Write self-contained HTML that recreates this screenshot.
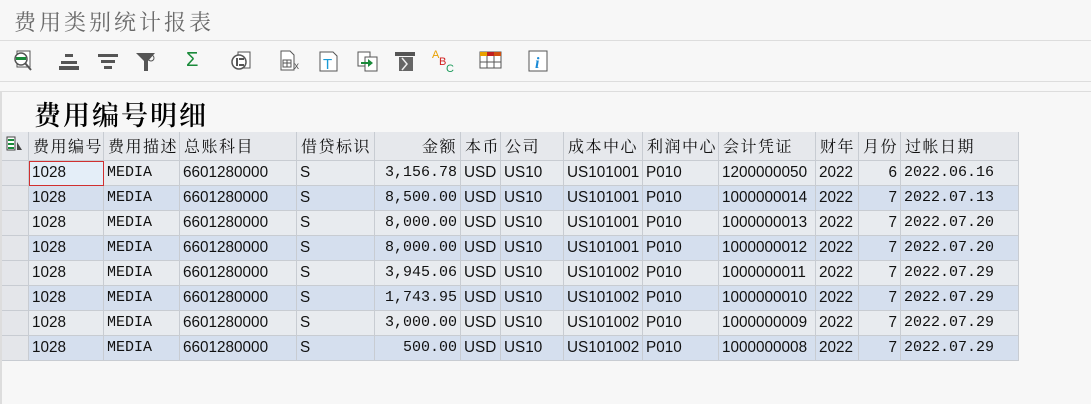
<!DOCTYPE html><html><head><meta charset="utf-8"><style>
*{margin:0;padding:0;box-sizing:border-box}
body{width:1091px;height:404px;background:#f7f7f7;position:relative;overflow:hidden;font-family:"Liberation Sans","Noto Sans CJK SC",sans-serif}
.a{position:absolute}
.t{left:14px;top:6px;font-family:"Noto Serif CJK SC",serif;font-size:22px;color:#6a6a6a;letter-spacing:3px}
.h2{left:34px;top:94px;font-family:"Noto Serif CJK SC",serif;font-size:27px;color:#000;letter-spacing:2px;font-weight:600}
.c{position:absolute;height:25px;line-height:24px;font-size:15.3px;color:#111;padding-left:3px;white-space:nowrap;border-right:1px solid #c8ccd2;border-bottom:1px solid #c8ccd2;overflow:hidden}
.hd{font-family:"Noto Serif CJK SC","Noto Sans CJK SC",serif;font-size:16px;letter-spacing:1.5px;background:#e6e8ec;height:29px;line-height:27px}
.r{text-align:right;padding-right:3px}
.m{font-family:"Liberation Mono",monospace;font-size:15px}
svg{position:absolute}
</style></head><body>
<div class="a t">费用类别统计报表</div>
<div class="a" style="left:0;top:40px;width:1091px;height:1px;background:#ddd"></div>
<div class="a" style="left:0;top:81px;width:1091px;height:1px;background:#ddd"></div>
<div class="a" style="left:0;top:91px;width:1091px;height:1px;background:#ddd"></div>
<div class="a" style="left:0;top:91px;width:2px;height:313px;background:#ddd"></div>
<svg style="left:12px;top:49px" width="24" height="24"><rect x="5" y="2" width="13" height="16" fill="#fff" stroke="#555"/><circle cx="9" cy="10" r="6" fill="#fff" stroke="#555" stroke-width="1.5"/><rect x="4" y="8" width="10" height="3" fill="#1a8a3a"/><line x1="13" y1="14" x2="19" y2="21" stroke="#555" stroke-width="2"/></svg>
<svg style="left:58px;top:52px" width="24" height="20"><rect x="7" y="2" width="8" height="3" fill="#555"/><rect x="3" y="9" width="16" height="3" fill="#555"/><rect x="1" y="14" width="20" height="4" fill="#555"/></svg>
<svg style="left:97px;top:52px" width="24" height="20"><rect x="1" y="2" width="20" height="3" fill="#555"/><rect x="4" y="8" width="14" height="3" fill="#555"/><rect x="7" y="14" width="8" height="3" fill="#555"/></svg>
<svg style="left:135px;top:51px" width="24" height="22"><path d="M1 2H20L13 10V20H9V10Z" fill="#555"/><circle cx="16" cy="7" r="3" fill="none" stroke="#555"/></svg>
<div class="a" style="left:186px;top:49px;font-size:20px;color:#1a8a3a">Σ</div>
<svg style="left:230px;top:49px" width="26" height="24"><rect x="8" y="3" width="12" height="16" fill="#fff" stroke="#555"/><circle cx="9" cy="13" r="7" fill="#fff" stroke="#555" stroke-width="1.5"/><rect x="6" y="9" width="2" height="8" fill="#555"/><rect x="9" y="9" width="5" height="2" fill="#555"/><rect x="9" y="15" width="5" height="2" fill="#555"/></svg>
<svg style="left:279px;top:49px" width="26" height="24"><path d="M2 2H11L15 6V21H2Z" fill="#fff" stroke="#555"/><rect x="4" y="11" width="8" height="7" fill="none" stroke="#555"/><line x1="4" y1="14" x2="12" y2="14" stroke="#555"/><line x1="8" y1="11" x2="8" y2="18" stroke="#555"/><text x="15" y="20" font-size="10" font-family="Liberation Sans" fill="#555">x</text></svg>
<svg style="left:318px;top:49px" width="22" height="24"><path d="M2 3H15L19 7V22H2Z" fill="#fff" stroke="#555"/><text x="5" y="20" font-size="15" font-family="Liberation Sans" fill="#1a9ad6">T</text></svg>
<svg style="left:356px;top:49px" width="26" height="24"><rect x="2" y="3" width="12" height="14" fill="#fff" stroke="#555"/><rect x="9" y="8" width="12" height="14" fill="#fff" stroke="#555"/><path d="M5 13H12V10L17 14L12 18V15H5Z" fill="#1a8a3a"/></svg>
<svg style="left:394px;top:49px" width="24" height="24"><rect x="1" y="3" width="20" height="4" fill="#555"/><path d="M5 8H19V22H5Z" fill="#666"/><path d="M8 9L13 15L8 21" fill="none" stroke="#eee" stroke-width="1.5"/></svg>
<svg style="left:431px;top:47px" width="26" height="28"><text x="1" y="11" font-size="11" font-family="Liberation Sans" fill="#e8a000">A</text><text x="8" y="18" font-size="11" font-family="Liberation Sans" fill="#d02020">B</text><text x="15" y="25" font-size="11" font-family="Liberation Sans" fill="#1a9a5a">C</text></svg>
<svg style="left:478px;top:50px" width="26" height="22"><rect x="2" y="2" width="21" height="16" fill="#fff" stroke="#555"/><rect x="2" y="2" width="7" height="4" fill="#e8a000"/><rect x="9" y="2" width="7" height="4" fill="#c02020"/><rect x="16" y="2" width="7" height="4" fill="#d05010"/><line x1="2" y1="12" x2="23" y2="12" stroke="#555"/><line x1="9" y1="6" x2="9" y2="18" stroke="#555"/><line x1="16" y1="6" x2="16" y2="18" stroke="#555"/></svg>
<svg style="left:527px;top:49px" width="24" height="24"><rect x="2" y="2" width="18" height="20" fill="#fff" stroke="#555"/><text x="8" y="19" font-size="16" font-style="italic" font-weight="bold" font-family="Liberation Serif" fill="#1a8ad6">i</text></svg>
<div class="a h2">费用编号明细</div>
<div id="g"></div>
<script>
var xs=[2,29,104,180,297,375,461,501,564,643,719,816,859,901,1019];
var hd=["","费用编号","费用描述","总账科目","借贷标识","金额","本币","公司","成本中心","利润中心","会计凭证","财年","月份","过帐日期"];
var rr=[0,0,0,0,0,1,0,0,0,0,0,0,1,0];
var amt=["3,156.78","8,500.00","8,000.00","8,000.00","3,945.06","1,743.95","3,000.00","500.00"];
var cc=["US101001","US101001","US101001","US101001","US101002","US101002","US101002","US101002"];
var doc=["1200000050","1000000014","1000000013","1000000012","1000000011","1000000010","1000000009","1000000008"];
var mo=["6","7","7","7","7","7","7","7"];
var dt=["2022.06.16","2022.07.13","2022.07.20","2022.07.20","2022.07.29","2022.07.29","2022.07.29","2022.07.29"];
var h="";
for(var i=0;i<14;i++){var w=xs[i+1]-xs[i];h+='<div class="c hd'+(rr[i]?' r':'')+'" style="left:'+xs[i]+'px;top:132px;width:'+w+'px;padding-left:'+(i?4:3)+'px">'+hd[i]+'</div>';}
h+='<svg style="left:6px;top:136px" width="18" height="16"><rect x="1" y="1" width="8" height="13" fill="#fff" stroke="#444"/><rect x="2" y="3" width="6" height="2" fill="#1a8a3a"/><rect x="2" y="7" width="6" height="2" fill="#1a8a3a"/><rect x="2" y="11" width="6" height="2" fill="#1a8a3a"/><path d="M11 6L16 14H11Z" fill="#444"/></svg>';
for(var r=0;r<8;r++){var y=161+r*25;var bg=r%2?"#d5dfee":"#e8ebef";
var v=["","1028","MEDIA","6601280000","S",amt[r],"USD","US10",cc[r],"P010",doc[r],"2022",mo[r],dt[r]];
for(var i=0;i<14;i++){var w=xs[i+1]-xs[i];var b=i==0?"#e4e6ea":bg;var cl=(i==2||i==5||i==13)?' m':'';
var st='left:'+xs[i]+'px;top:'+y+'px;width:'+w+'px;background:'+b+';';
if(i==1&&r==0)st+='background:#e4eef8;outline:1px solid #d03030;outline-offset:-1px;';
h+='<div class="c'+cl+(rr[i]?' r':'')+'" style="'+st+'">'+v[i]+'</div>';}}
document.getElementById("g").innerHTML=h;
</script>
</body></html>
